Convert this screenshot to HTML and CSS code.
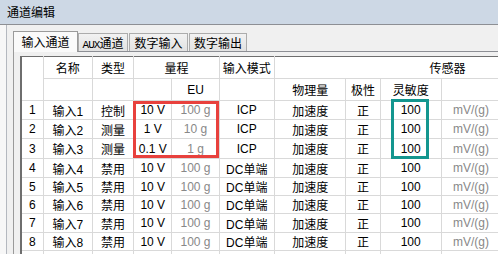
FILE: index.html
```html
<!DOCTYPE html>
<html lang="zh">
<head>
    <meta charset="UTF-8">
    <title>通道编辑</title>
    <link rel="stylesheet" href="styles.css">
</head>
<body>
    <div class="titlebar">通道编辑</div>

    <div class="dialog">
        <div class="tabs">
            <div class="tab active">输入通道</div>
            <div class="tab tab-aux"><span class="latin">AUX</span>通道</div>
            <div class="tab tab-in">数字输入</div>
            <div class="tab tab-out">数字输出</div>
        </div>

        <div class="panel">
            <table class="grid">
                <colgroup>
                    <col class="c-no">
                    <col class="c-name">
                    <col class="c-type">
                    <col class="c-range">
                    <col class="c-eu">
                    <col class="c-mode">
                    <col class="c-qty">
                    <col class="c-pol">
                    <col class="c-sens">
                    <col class="c-unit">
                    <col class="c-more">
                </colgroup>
                <thead>
                    <tr class="head-1">
                        <th rowspan="2"></th>
                        <th>名称</th>
                        <th>类型</th>
                        <th colspan="2">量程</th>
                        <th>输入模式</th>
                        <th colspan="5">传感器</th>
                    </tr>
                    <tr class="head-2">
                        <th></th>
                        <th></th>
                        <th></th>
                        <th>EU</th>
                        <th></th>
                        <th>物理量</th>
                        <th>极性</th>
                        <th>灵敏度</th>
                        <th></th>
                        <th></th>
                    </tr>
                </thead>
                <tbody>
                    <tr class="r19"><td>1</td><td>输入1</td><td>控制</td><td>10 V</td><td class="dim">100 g</td><td>ICP</td><td>加速度</td><td>正</td><td>100</td><td class="dim">mV/(g)</td><td></td></tr>
                    <tr class="r19"><td>2</td><td>输入2</td><td>测量</td><td>1 V</td><td class="dim">10 g</td><td>ICP</td><td>加速度</td><td>正</td><td>100</td><td class="dim">mV/(g)</td><td></td></tr>
                    <tr class="r20"><td>3</td><td>输入3</td><td>测量</td><td>0.1 V</td><td class="dim">1 g</td><td>ICP</td><td>加速度</td><td>正</td><td>100</td><td class="dim">mV/(g)</td><td></td></tr>
                    <tr class="r19"><td>4</td><td>输入4</td><td>禁用</td><td>10 V</td><td class="dim">100 g</td><td>DC单端</td><td>加速度</td><td>正</td><td>100</td><td class="dim">mV/(g)</td><td></td></tr>
                    <tr class="r18"><td>5</td><td>输入5</td><td>禁用</td><td>10 V</td><td class="dim">100 g</td><td>DC单端</td><td>加速度</td><td>正</td><td>100</td><td class="dim">mV/(g)</td><td></td></tr>
                    <tr class="r18"><td>6</td><td>输入6</td><td>禁用</td><td>10 V</td><td class="dim">100 g</td><td>DC单端</td><td>加速度</td><td>正</td><td>100</td><td class="dim">mV/(g)</td><td></td></tr>
                    <tr class="r19"><td>7</td><td>输入7</td><td>禁用</td><td>10 V</td><td class="dim">100 g</td><td>DC单端</td><td>加速度</td><td>正</td><td>100</td><td class="dim">mV/(g)</td><td></td></tr>
                    <tr class="r18"><td>8</td><td>输入8</td><td>禁用</td><td>10 V</td><td class="dim">100 g</td><td>DC单端</td><td>加速度</td><td>正</td><td>100</td><td class="dim">mV/(g)</td><td></td></tr>
                    <tr class="r18"><td></td><td></td><td></td><td></td><td></td><td></td><td></td><td></td><td></td><td></td><td></td></tr>
                </tbody>
            </table>

            <div class="mark mark-range"></div>
            <div class="mark mark-sens"></div>
        </div>
    </div>
</body>
</html>
```

FILE: styles.css
```css
body {
    margin: 0;
    width: 498px;
    height: 254px;
    overflow: hidden;
    background-color: #f7f7f7;
    font-family: "Liberation Sans", "Noto Sans CJK SC", sans-serif;
    font-size: 12px;
    color: #000;
}

.titlebar {
    height: 24px;
    line-height: 24px;
    padding-left: 7px;
    background-color: #cdd8e5;
    border-bottom: 1px solid #8d8f94;
    font-family: "Noto Sans CJK SC", sans-serif;
}

.dialog {
    margin-left: 6px;
    padding: 6px 0 0 6px;
    height: 223px;
    border-left: 1px solid #b4b8bf;
    background-color: #f0f0f0;
}

.tabs {
    display: flex;
    align-items: flex-end;
    position: relative;
    z-index: 2;
}

.tab {
    box-sizing: border-box;
    height: 18px;
    line-height: 17px;
    border: 1px solid #acacac;
    border-bottom: none;
    background: linear-gradient(#f2f2f2, #e2e2e2);
    text-align: center;
    font-family: "Noto Sans CJK SC", sans-serif;
}

.tab.active {
    width: 65px;
    height: 21px;
    line-height: 20px;
    margin-bottom: -1px;
    border-color: #9a9a9a;
    background: #fafafa;
}

.tab-aux {
    width: 50px;
}

.tab-in {
    width: 59px;
    margin-left: 1px;
}

.tab-out {
    width: 58px;
    margin-left: 1px;
}

.latin {
    font-family: "Liberation Mono", monospace;
    font-size: 11px;
    letter-spacing: -1px;
}

.panel {
    position: relative;
    padding: 4px 0 0 6px;
    border-top: 1px solid #8c8e94;
    border-left: 1px solid #9a9a9a;
    overflow: hidden;
    height: 198px;
}

.grid {
    border-collapse: collapse;
    table-layout: fixed;
    width: 601px;
    background-color: #fff;
    border-top: 1px solid #6e6e6e;
    border-left: 2px solid #6e6e6e;
}

.c-no { width: 22px; }
.c-name { width: 49px; }
.c-type { width: 41px; }
.c-range { width: 38px; }
.c-eu { width: 47px; }
.c-mode { width: 55px; }
.c-qty { width: 71px; }
.c-pol { width: 34px; }
.c-sens { width: 61px; }
.c-unit { width: 59px; }
.c-more { width: 119px; }

.grid th,
.grid td {
    padding: 0;
    border: 1px solid #d9d9d9;
    text-align: center;
    font-weight: normal;
    white-space: nowrap;
    overflow: hidden;
}

.grid thead tr:first-child th {
    border-top: none;
}

.grid tr > :first-child {
    border-left: none;
}

.head-1 { height: 22px; }
.head-2 { height: 22px; }
.r18 { height: 18px; }
.r19 { height: 19px; }
.r20 { height: 20px; }

.dim {
    color: #888;
}

.mark {
    position: absolute;
    box-sizing: border-box;
    border: 3px solid;
}

.mark-range {
    left: 119px;
    top: 49px;
    width: 86px;
    height: 57px;
    border-color: #e8413d;
}

.mark-sens {
    left: 377px;
    top: 47px;
    width: 38px;
    height: 60px;
    border-color: #13968f;
}
```
